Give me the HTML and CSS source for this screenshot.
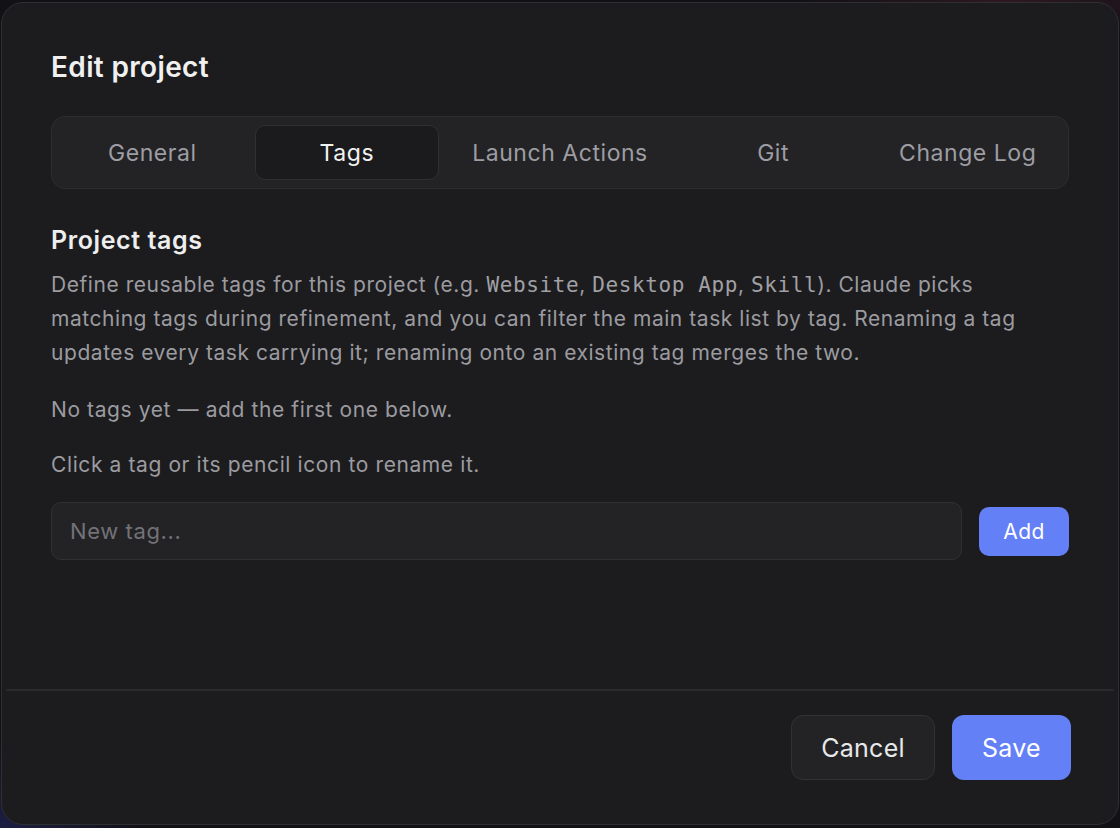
FILE: index.html
```html
<!DOCTYPE html>
<html lang="en">
<head>
<meta charset="utf-8">
<title>Edit project</title>
<link rel="stylesheet" href="styles.css">
</head>
<body>
<div class="backdrop">
  <div class="dialog">
    <div class="content">
      <h1 class="title">Edit project</h1>
      <div class="tabs">
        <div class="tab">General</div>
        <div class="tab active">Tags</div>
        <div class="tab">Launch Actions</div>
        <div class="tab">Git</div>
        <div class="tab">Change Log</div>
      </div>
      <h2 class="section-title">Project tags</h2>
      <p class="desc">Define reusable tags for this project (e.g. <code>Website</code>, <code>Desktop App</code>, <code>Skill</code>). Claude picks matching tags during refinement, and you can filter the main task list by tag. Renaming a tag updates every task carrying it; renaming onto an existing tag merges the two.</p>
      <p class="note first">No tags yet — add the first one below.</p>
      <p class="note">Click a tag or its pencil icon to rename it.</p>
      <div class="add-row">
        <input class="tag-input" type="text" placeholder="New tag...">
        <button class="btn btn-primary btn-small">Add</button>
      </div>
    </div>
    <div class="divider"></div>
    <div class="footer">
      <button class="btn btn-secondary">Cancel</button>
      <button class="btn btn-primary">Save</button>
    </div>
  </div>
</div>
</body>
</html>
```
FILE: styles.css
```css
* { box-sizing: border-box; }
html, body {
  margin: 0;
  padding: 0;
  background: #111116;
  font-family: Inter, "Noto Sans", sans-serif;
}
.backdrop {
  width: 1120px;
  height: 828px;
  padding: 2px 1px 3px 1px;
  background:
    radial-gradient(ellipse 140px 90px at 0% 100%, #1c1f44 0%, rgba(17,17,22,0) 100%),
    radial-gradient(ellipse 220px 40px at 90% 0%, #2e1820 0%, rgba(17,17,22,0) 100%),
    #111116;
}
.dialog {
  width: 1118px;
  height: 823px;
  background: #1c1c1e;
  border: 1px solid #2f2f32;
  border-radius: 22px;
  display: flex;
  flex-direction: column;
}
.content {
  flex: 1;
  padding: 48px 49px 0 49px;
}
.title {
  margin: 0;
  font-size: 28px;
  line-height: 32px;
  font-weight: 600;
  letter-spacing: 0.35px;
  color: #f0f0f0;
}
.tabs {
  margin-top: 33px;
  display: grid;
  grid-template-columns: repeat(5, 1fr);
  gap: 10px;
  padding: 8px;
  background: #232326;
  border: 1px solid #2d2d30;
  border-radius: 14px;
}
.tab {
  height: 55px;
  display: flex;
  align-items: center;
  justify-content: center;
  padding: 0 22px;
  font-size: 23px;
  letter-spacing: 0.55px;
  color: #9d9da3;
  white-space: nowrap;
  border: 1px solid transparent;
  border-radius: 10px;
}
.tab.active {
  background: #1b1b1d;
  border-color: #303033;
  color: #f2f2f2;
}
.section-title {
  margin: 37px 0 0 0;
  font-size: 25px;
  line-height: 28px;
  font-weight: 600;
  letter-spacing: 0.6px;
  color: #eeeeee;
}
.desc {
  margin: 14px 0 0 0;
  font-size: 21px;
  line-height: 34px;
  letter-spacing: 0.55px;
  color: #9b9ba0;
}
.desc code {
  font-family: "DejaVu Sans Mono", "Liberation Mono", monospace;
  font-size: 21px;
  letter-spacing: 0.6px;
  color: #a0a0a5;
}
.note {
  margin: 21px 0 0 0;
  font-size: 21px;
  line-height: 34px;
  letter-spacing: 0.6px;
  color: #9b9ba0;
}
.note.first { margin-top: 23px; }
.add-row {
  margin-top: 20px;
  display: flex;
  align-items: center;
  gap: 17px;
}
.tag-input {
  flex: 1;
  height: 58px;
  padding: 0 18px;
  background: #232326;
  border: 1px solid #303033;
  border-radius: 10px;
  font-family: Inter, "Noto Sans", sans-serif;
  font-size: 22px;
  letter-spacing: 0.6px;
  color: #eeeeee;
  outline: none;
}
.tag-input::placeholder { color: #727277; }
.btn {
  font-family: Inter, "Noto Sans", sans-serif;
  border-radius: 12px;
  border: 1px solid transparent;
  height: 65px;
  font-size: 25px;
  letter-spacing: 0.3px;
  cursor: pointer;
}
.btn-primary {
  background: #6480f6;
  color: #ffffff;
  padding: 0 29px;
}
.btn-secondary {
  background: #232326;
  border-color: #323235;
  color: #e8e8e8;
  padding: 0 29px;
}
.btn-small {
  height: 49px;
  width: 90px;
  padding: 0;
  font-size: 21px;
  letter-spacing: 0.5px;
  border-radius: 10px;
}
.divider {
  height: 2px;
  margin: 0 4px;
  background: #2b2b2e;
}
.footer {
  display: flex;
  justify-content: flex-end;
  gap: 17px;
  padding: 24px 47px 44px 47px;
}
```
